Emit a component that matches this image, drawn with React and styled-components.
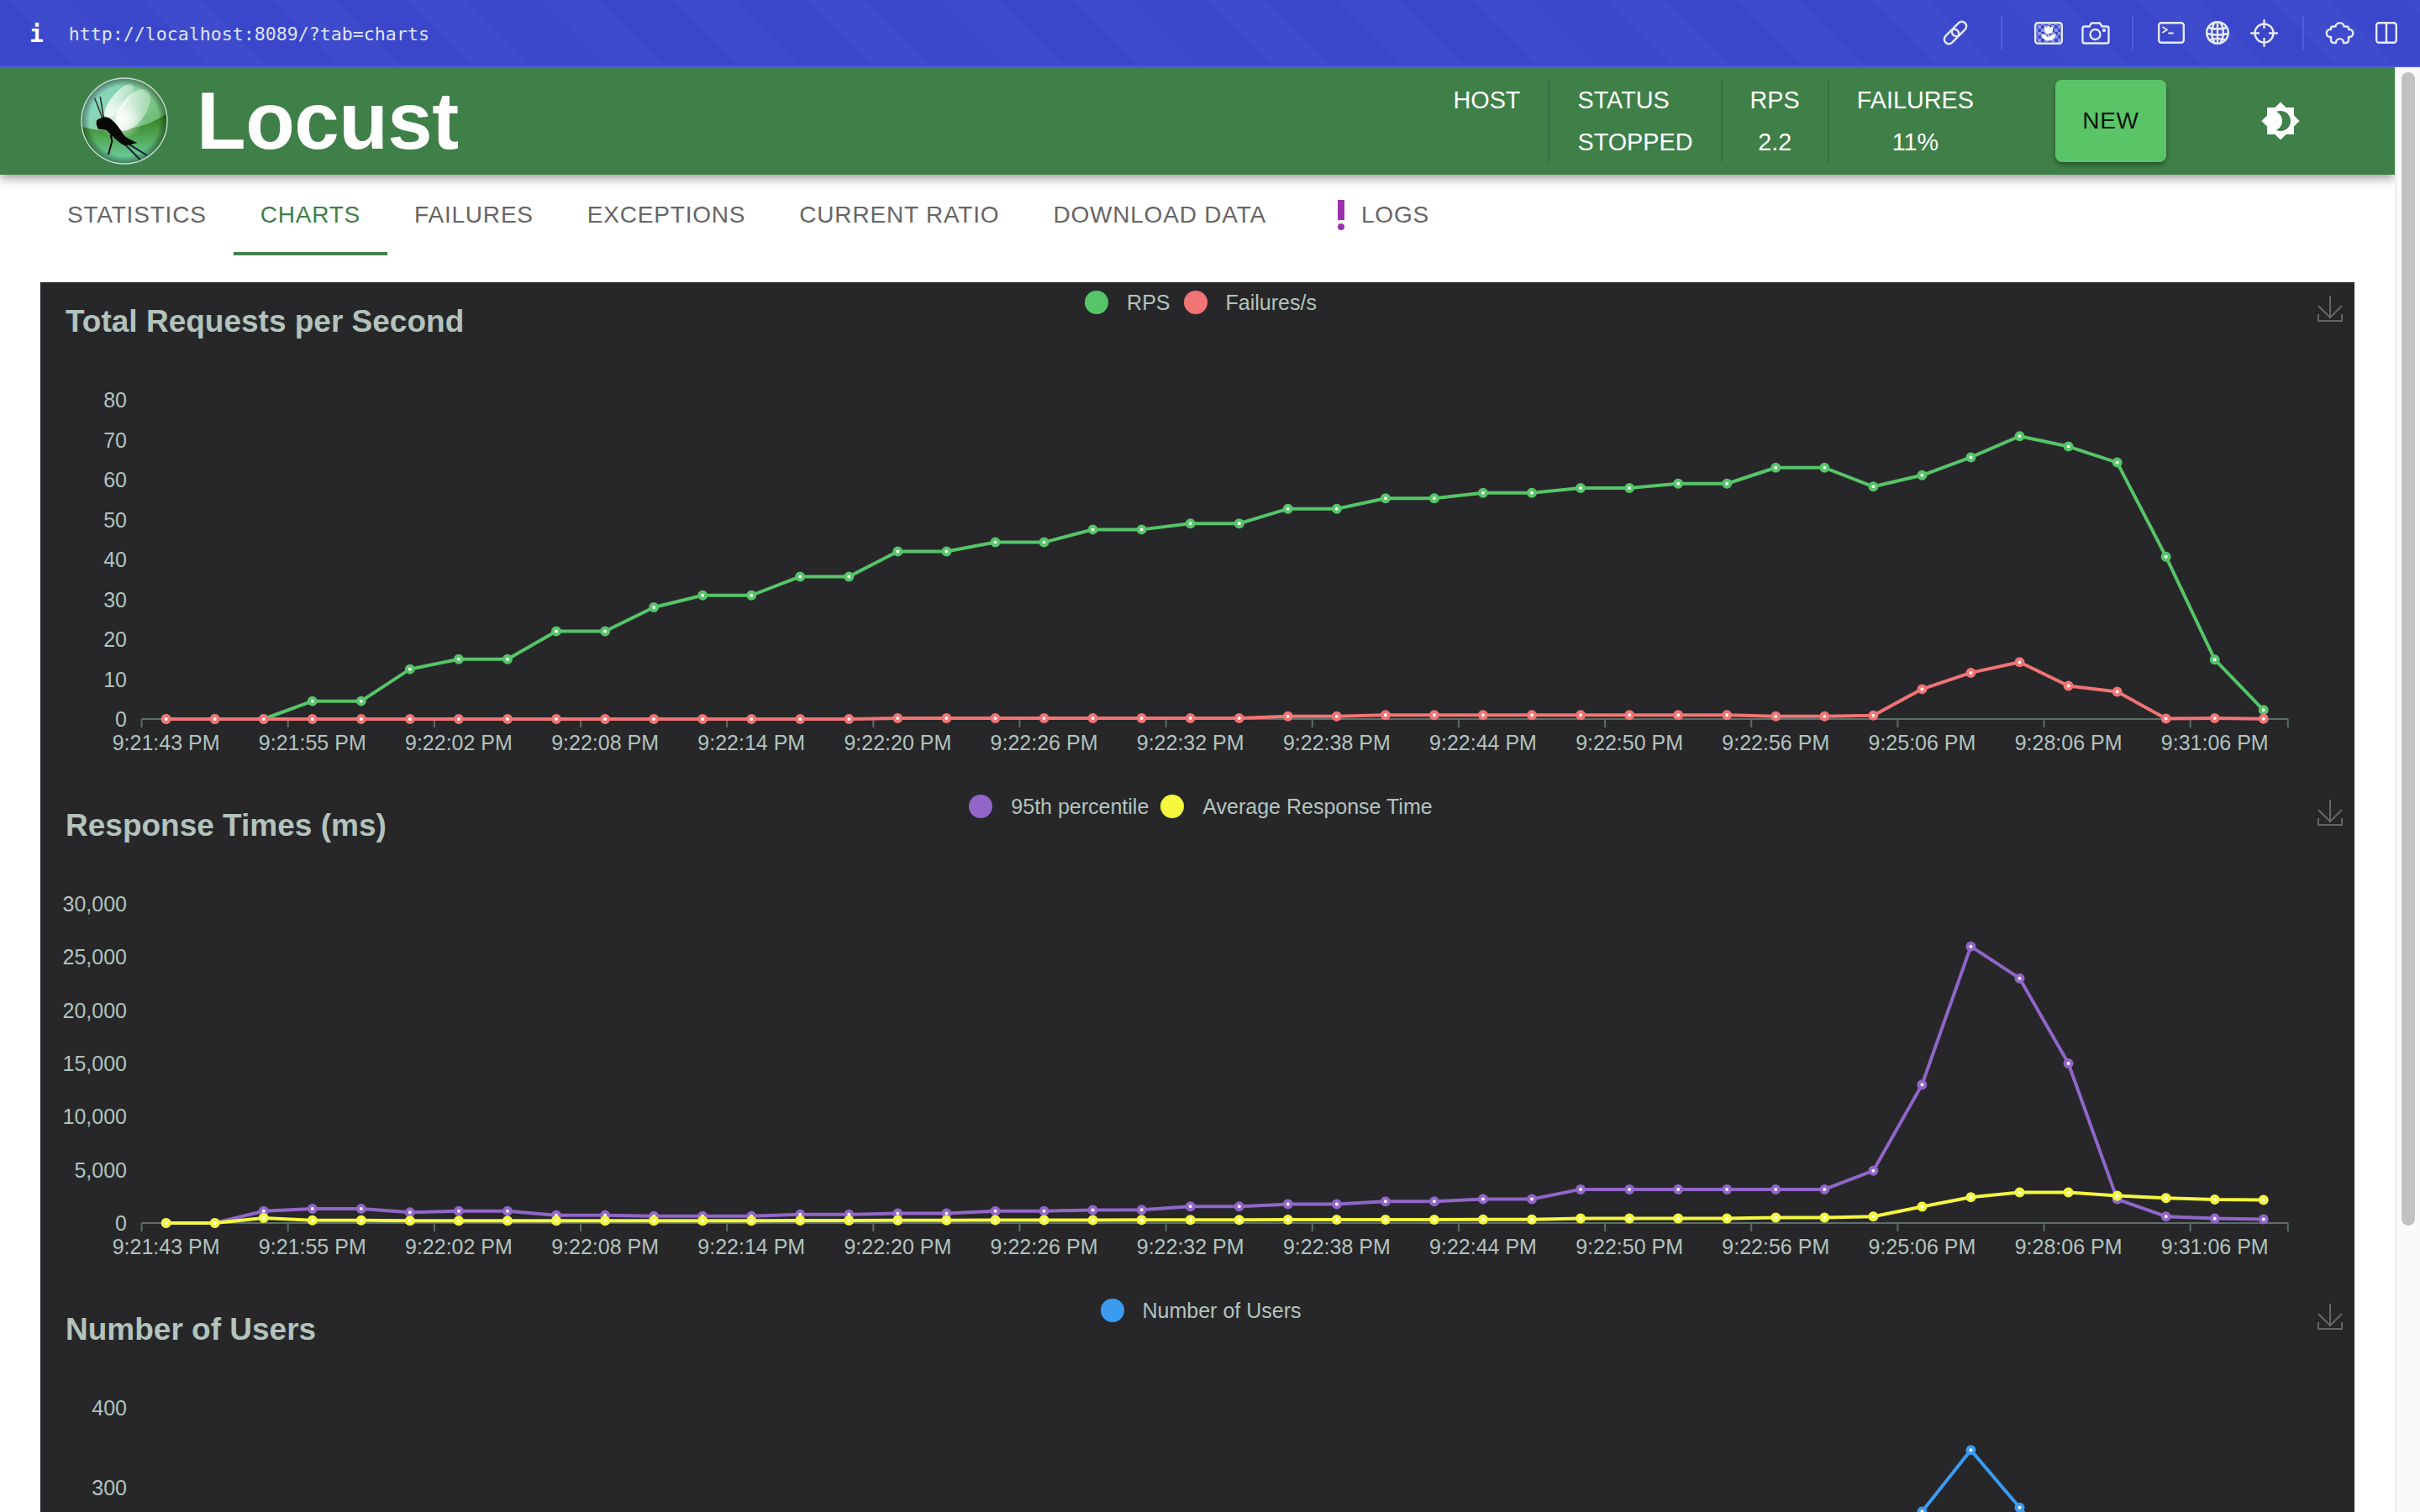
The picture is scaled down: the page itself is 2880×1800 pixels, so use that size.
import React from 'react'
import styled, { createGlobalStyle } from 'styled-components'

const GlobalStyle = createGlobalStyle`
  html, body {
    margin: 0;
    padding: 0;
    overflow: hidden;
    background: #fff;
    font-family: 'Liberation Sans', Arial, sans-serif;
  }
`

const LABELS = [
  '9:21:43 PM', '9:21:55 PM', '9:22:02 PM', '9:22:08 PM', '9:22:14 PM',
  '9:22:20 PM', '9:22:26 PM', '9:22:32 PM', '9:22:38 PM', '9:22:44 PM',
  '9:22:50 PM', '9:22:56 PM', '9:25:06 PM', '9:28:06 PM', '9:31:06 PM',
]

const RPS = [0, 0, 0, 4.5, 4.5, 12.5, 15, 15, 22, 22, 28, 31, 31, 35.7, 35.7, 42, 42, 44.3, 44.3, 47.5, 47.5, 49, 49, 52.7, 52.7, 55.3, 55.3, 56.7, 56.7, 57.9, 57.9, 59, 59, 63, 63, 58.25, 61.1, 65.6, 70.9, 68.3, 64.3, 40.7, 14.9, 2.25]
const FAILS = [0, 0, 0, 0, 0, 0, 0, 0, 0, 0, 0, 0, 0, 0, 0, 0.2, 0.2, 0.2, 0.2, 0.2, 0.2, 0.2, 0.2, 0.7, 0.7, 1, 1, 1, 1, 1, 1, 1, 1, 0.7, 0.7, 0.9, 7.5, 11.6, 14.25, 8.3, 6.85, 0.1, 0.2, 0.05]
const P95 = [0, 0, 1130, 1340, 1340, 1000, 1130, 1130, 735, 735, 655, 655, 655, 800, 800, 900, 900, 1130, 1130, 1220, 1245, 1560, 1560, 1770, 1770, 2030, 2030, 2245, 2245, 3165, 3165, 3165, 3165, 3165, 3165, 4920, 13015, 26000, 23000, 15000, 2244, 615, 433, 362]
const AVG = [0, 0, 472, 262, 262, 220, 220, 220, 220, 220, 220, 220, 220, 240, 240, 260, 260, 270, 270, 280, 300, 300, 300, 320, 320, 320, 320, 340, 340, 433, 433, 433, 433, 512, 512, 614, 1535, 2425, 2874, 2874, 2560, 2354, 2205, 2165]
const USERS = [...Array.from({ length: 36 }, (_, i) => i * 7), 270, 347, 275, 200, 150, 100, 40, 0]

const CHARTS = [
  {
    title: 'Total Requests per Second',
    max: 80,
    ticks: [80, 70, 60, 50, 40, 30, 20, 10, 0],
    legendGap: 16,
    series: [
      { name: 'RPS', color: '#56c568', data: RPS },
      { name: 'Failures/s', color: '#f17474', data: FAILS },
    ],
  },
  {
    title: 'Response Times (ms)',
    max: 30000,
    ticks: [30000, 25000, 20000, 15000, 10000, 5000, 0],
    legendGap: 14,
    series: [
      { name: '95th percentile', color: '#9166c8', data: P95 },
      { name: 'Average Response Time', color: '#f4f73d', data: AVG },
    ],
  },
  {
    // runs past the bottom of the window, only the upper ticks are in view
    title: 'Number of Users',
    max: 400,
    ticks: [400, 300],
    legendGap: 0,
    belowFold: true,
    series: [{ name: 'Number of Users', color: '#3b9bf0', data: USERS }],
  },
]

const TABS = ['STATISTICS', 'CHARTS', 'FAILURES', 'EXCEPTIONS', 'CURRENT RATIO', 'DOWNLOAD DATA']

const STATS = [
  { label: 'HOST', value: '', align: 'flex-end' },
  { label: 'STATUS', value: 'STOPPED', align: 'flex-start' },
  { label: 'RPS', value: '2.2', align: 'center' },
  { label: 'FAILURES', value: '11%', align: 'center' },
]

const Page = styled.div`
  width: 2880px;
  height: 1800px;
  display: flex;
  flex-direction: column;
  overflow: hidden;
`

const BrowserBar = styled.div`
  flex: none;
  height: 78px;
  border-bottom: 2px solid #4a59d8;
  display: flex;
  align-items: center;
  justify-content: space-between;
  padding: 0 27px 0 35px;
  color: #e6e9fa;
  background: repeating-linear-gradient(45deg, #3a47cb 0 62px, #3e4bcc 62px 112px);
`

const UrlGroup = styled.div`
  display: flex;
  align-items: center;
  gap: 30px;
  padding-top: 2px;
`

const InfoMark = styled.span`
  font: bold 28px 'DejaVu Sans Mono', monospace;
  color: #fff;
`

const Url = styled.span`
  font: 21.6px 'DejaVu Sans Mono', monospace;
  color: #dfe3f8;
`

const BarIcons = styled.div`
  display: flex;
  align-items: center;
`

const BarIcon = styled.svg`
  display: block;
  flex: none;
  margin-left: ${(p) => p.$gap || 0}px;
  fill: none;
  stroke: #e6e9fa;
  stroke-width: 2.4;
  stroke-linecap: round;
  stroke-linejoin: round;
`

const BarRule = styled.div`
  flex: none;
  width: 2px;
  height: 40px;
  margin: 0 ${(p) => p.$right}px 0 ${(p) => p.$left}px;
  background: #4f5dd8;
`

const Body = styled.div`
  flex: 1;
  min-height: 0;
  display: flex;
`

const Main = styled.main`
  width: 2850px;
  flex: none;
  overflow: hidden;
`

const ScrollTrack = styled.div`
  flex: 1;
  box-sizing: border-box;
  border-left: 2px solid #ececec;
  background: #fafafa;
  padding: 6px 6px 0 6px;
`

const ScrollThumb = styled.div`
  height: 1373px;
  width: 16px;
  border-radius: 8px;
  background: #c1c1c1;
`

const AppBar = styled.header`
  position: relative;
  z-index: 2;
  height: 128px;
  display: flex;
  align-items: center;
  padding: 0 112px 0 96px;
  background: #3f7f48;
  color: #fff;
  box-shadow: 0 4px 8px -2px rgba(0, 0, 0, 0.25), 0 8px 10px rgba(0, 0, 0, 0.12), 0 2px 20px rgba(0, 0, 0, 0.1);
`

const Brand = styled.div`
  display: flex;
  align-items: center;
  gap: 34px;
  flex: 1;
`

const BrandName = styled.span`
  font-size: 96px;
  font-weight: 700;
  line-height: 1;
  letter-spacing: -0.5px;
`

const Stats = styled.div`
  display: flex;
  align-items: stretch;
  height: 98px;
  margin-right: 64px;
`

const Stat = styled.div`
  display: flex;
  flex-direction: column;
  align-items: ${(p) => p.$align};
  padding: 0 33px;
  border-right: 2px solid #376f40;
  font-size: 28.8px;
  line-height: 49.5px;
  &:last-child {
    border-right: 0;
  }
`

const NewButton = styled.button`
  width: 132px;
  height: 98px;
  padding: 0;
  border: 0;
  border-radius: 8px;
  background: #5ac566;
  color: #101510;
  font: 28px 'Liberation Sans', Arial, sans-serif;
  letter-spacing: 0.8px;
  box-shadow: 0 3px 6px -1px rgba(0, 0, 0, 0.3), 0 4px 5px rgba(0, 0, 0, 0.14);
`

const ThemeToggle = styled.svg`
  display: block;
  margin-left: 112px;
  fill: #fff;
`

const TabRow = styled.nav`
  display: flex;
  padding-left: 48px;
`

const Tab = styled.div`
  height: 96px;
  display: flex;
  align-items: center;
  padding: 0 32px;
  font-size: 28px;
  letter-spacing: 0.8px;
  color: ${(p) => (p.$active ? '#3f7f48' : '#666')};
  box-shadow: ${(p) => (p.$active ? 'inset 0 -4px 0 #3f7f48' : 'none')};
`

const LogsMark = styled.svg`
  display: block;
  margin-left: 1px;
  fill: #9c2fae;
`

const ChartArea = styled.section`
  padding: 32px 48px 0;
`

const Card = styled.div`
  background: #27272a;
`

const ChartHead = styled.div`
  height: 80px;
  display: grid;
  grid-template-columns: 1fr auto 1fr;
  padding: 0 22px 0 30px;
`

const ChartTitle = styled.h2`
  margin: 0;
  padding-top: 27px;
  font-size: 37px;
  line-height: 40px;
  font-weight: 700;
  color: #b3c3bc;
`

const Legend = styled.div`
  display: flex;
  align-items: center;
  height: 28px;
  margin-top: 10px;
  gap: ${(p) => p.$gap}px;
`

const LegendItem = styled.div`
  display: flex;
  align-items: center;
  gap: 22px;
  font-size: 25px;
  color: #b3c3bc;
`

const LegendDot = styled.span`
  width: 28px;
  height: 28px;
  border-radius: 50%;
  background: ${(p) => p.$color};
`

const DownloadIcon = styled.svg`
  justify-self: end;
  margin: 15px -8px 0 0;
  fill: none;
  stroke: #666;
  stroke-width: 2;
`

const Plot = styled.svg`
  display: block;
`

const AxisLabel = styled.text`
  fill: #b3c3bc;
  font-size: 25px;
  font-family: 'Liberation Sans', Arial, sans-serif;
`

const PLOT_TOP = 60
const PLOT_BOTTOM = 440
const AXIS_LEFT = 120.6
const BAND = 58.05

const xAt = (i) => AXIS_LEFT + BAND * (i + 0.5)

function LineChart({ chart }) {
  const yAt = (v) => PLOT_BOTTOM - (v / chart.max) * (PLOT_BOTTOM - PLOT_TOP)
  const axisEnd = AXIS_LEFT + BAND * 44
  const tickXs = [...LABELS.map((_, i) => AXIS_LEFT + BAND * i * 3), axisEnd]

  return (
    <Plot width="2754" height="520">
      {chart.ticks.map((t) => (
        <AxisLabel key={t} x="103" y={yAt(t) + 9} textAnchor="end">
          {t.toLocaleString('en-US')}
        </AxisLabel>
      ))}
      {!chart.belowFold && (
        <>
          <line x1={AXIS_LEFT} x2={axisEnd} y1={PLOT_BOTTOM} y2={PLOT_BOTTOM} stroke="#5b6f66" strokeWidth="2" />
          {tickXs.map((x) => (
            <line key={x} x1={x} x2={x} y1={PLOT_BOTTOM} y2={PLOT_BOTTOM + 10} stroke="#5b6f66" strokeWidth="2" />
          ))}
          {LABELS.map((label, i) => (
            <AxisLabel key={label} x={xAt(i * 3)} y={PLOT_BOTTOM + 37} textAnchor="middle">
              {label}
            </AxisLabel>
          ))}
        </>
      )}
      {chart.series.map((s) => (
        <g key={s.name}>
          <polyline
            points={s.data.map((v, i) => `${xAt(i)},${yAt(v)}`).join(' ')}
            fill="none"
            stroke={s.color}
            strokeWidth="4"
            strokeLinejoin="round"
          />
          {s.data.map((v, i) => (
            <circle key={i} cx={xAt(i)} cy={yAt(v)} r="4" fill="#fff" stroke={s.color} strokeWidth="4" />
          ))}
        </g>
      ))}
    </Plot>
  )
}

function ChartBlock({ chart }) {
  return (
    <div>
      <ChartHead>
        <ChartTitle>{chart.title}</ChartTitle>
        <Legend $gap={chart.legendGap}>
          {chart.series.map((s) => (
            <LegendItem key={s.name}>
              <LegendDot $color={s.color} />
              {s.name}
            </LegendItem>
          ))}
        </Legend>
        <DownloadIcon width="30" height="32" viewBox="0 0 30 32">
          <path d="M15 1v26M1 13l14 14 14-14M1 23v8h28v-8" />
        </DownloadIcon>
      </ChartHead>
      <LineChart chart={chart} />
    </div>
  )
}

function Logo() {
  return (
    <svg width="104" height="104" viewBox="0 0 104 104">
      <defs>
        <linearGradient id="skyGrad" x1="0" y1="0" x2="1" y2="0.7">
          <stop offset="0" stopColor="#8fdce0" />
          <stop offset="0.55" stopColor="#84cf96" />
          <stop offset="1" stopColor="#5fae62" />
        </linearGradient>
        <linearGradient id="groundGrad" x1="0" y1="0" x2="0" y2="1">
          <stop offset="0" stopColor="#2f7a1c" />
          <stop offset="0.45" stopColor="#4fa552" />
          <stop offset="1" stopColor="#74d6ae" />
        </linearGradient>
        <radialGradient id="rimGrad" cx="0.5" cy="0.5" r="0.5">
          <stop offset="0.8" stopColor="#000" stopOpacity="0" />
          <stop offset="1" stopColor="#0a2a10" stopOpacity="0.55" />
        </radialGradient>
        <radialGradient id="glowGrad" cx="0.5" cy="0.5" r="0.5">
          <stop offset="0" stopColor="#fff" stopOpacity="0.95" />
          <stop offset="1" stopColor="#fff" stopOpacity="0" />
        </radialGradient>
        <linearGradient id="wingGrad" x1="0" y1="1" x2="0.6" y2="0">
          <stop offset="0" stopColor="#fff" stopOpacity="0.95" />
          <stop offset="1" stopColor="#fff" stopOpacity="0.3" />
        </linearGradient>
        <clipPath id="ballClip">
          <circle cx="52" cy="52" r="51" />
        </clipPath>
      </defs>
      <g clipPath="url(#ballClip)">
        <rect width="104" height="104" fill="url(#skyGrad)" />
        <path d="M0 58C20 66 70 68 104 42V104H0z" fill="url(#groundGrad)" />
        <ellipse cx="48" cy="50" rx="26" ry="24" fill="url(#glowGrad)" />
        <ellipse cx="45.7" cy="28" rx="9" ry="25" transform="rotate(40 45.7 28)" fill="url(#wingGrad)" />
        <ellipse cx="62.3" cy="39" rx="15" ry="29" transform="rotate(36 62.3 39)" fill="url(#wingGrad)" />
        <rect width="104" height="104" fill="url(#rimGrad)" />
      </g>
      <circle cx="52" cy="52" r="51" fill="none" stroke="#c9dcd0" strokeWidth="1.4" />
      <g stroke="#14203a" fill="none" strokeWidth="1.6">
        <path d="M25.7 48L16.7 24.7M27.3 48L23.3 23" stroke="#2a3a38" />
        <path d="M49 76.3L70.7 98M57.3 79.7L79 93" strokeWidth="2" />
        <path d="M35.7 68L37.3 76.3L33 92" stroke="#0b0b0b" strokeWidth="2" />
      </g>
      <path d="M19 51.3C22 49 27 47 30.7 47.3C36 49 41 54 44 58C48 63 51 69 54 71.3C58 74 63 76 67.3 78C62 79 57 81 52.3 81.3C47 79 43 75 39 71.3C36 68 33 65 30.7 63C27 62 23 63 20.7 61.3C19 58 18 54 19 51.3z" fill="#070907" />
    </svg>
  )
}

function BrowserIcons() {
  return (
    <BarIcons>
      <BarIcon width="30" height="30" viewBox="0 0 30 30">
        <rect x="5" y="9.500" width="11" height="20" rx="5.500" transform="rotate(45 10.500 19.500)" />
        <rect x="14" y="0.500" width="11" height="20" rx="5.500" transform="rotate(45 19.500 10.500)" />
      </BarIcon>
      <BarRule $left={39} $right={38} />
      <BarIcon width="34" height="27" viewBox="0 0 34 27">
        <defs>
          <pattern id="checks" width="8" height="8" patternUnits="userSpaceOnUse">
            <rect width="4" height="4" fill="#8d97e4" stroke="none" />
            <rect x="4" y="4" width="4" height="4" fill="#8d97e4" stroke="none" />
          </pattern>
        </defs>
        <rect x="1.200" y="1.200" width="31.600" height="24.600" rx="3" />
        <rect x="3" y="3" width="28" height="21" fill="url(#checks)" stroke="none" />
        <path d="M12 5l2.500 2L17 4.500 19.500 7 22 5v5c0 2.500-2 4-5 4s-5-1.500-5-4z" fill="#fff" stroke="none" />
        <path d="M17 13v9M9 15c4 0 8 3 8 7-4 0-8-3-8-7zM25 15c-4 0-8 3-8 7 4 0 8-3 8-7z" fill="#fff" stroke="#fff" strokeWidth="1" />
      </BarIcon>
      <BarIcon $gap={22} width="34" height="27" viewBox="0 0 34 27">
        <path d="M3.500 5.500h6l2.500-4h10l2.500 4h6a2 2 0 0 1 2 2v16a2 2 0 0 1-2 2h-27a2 2 0 0 1-2-2v-16a2 2 0 0 1 2-2z" />
        <circle cx="16.500" cy="15" r="6" />
        <circle cx="27" cy="10" r="1" fill="#e6e9fa" />
      </BarIcon>
      <BarRule $left={26} $right={29} />
      <BarIcon width="32" height="26" viewBox="0 0 32 26">
        <rect x="1.200" y="1.200" width="29.600" height="23.600" rx="3" />
        <path d="M6 6.500l5 3-5 3M13 13.500h5" strokeWidth="2" />
      </BarIcon>
      <BarIcon $gap={25} width="28" height="28" viewBox="0 0 28 28" strokeWidth="2">
        <circle cx="14" cy="14" r="12.800" />
        <path d="M3 8c6 2 16 2 22 0M1.500 15c8 2 17 2 25 0M4.500 22.500c6-2 13-2 19 0" />
        <path d="M11 1.500C6 8 6 20 11 26.500M17 1.500C22 8 22 20 17 26.500M14 1.200v25.600" />
      </BarIcon>
      <BarIcon $gap={25} width="33" height="33" viewBox="0 0 33 33">
        <circle cx="16.500" cy="16.500" r="11" />
        <path d="M16.500 1v9M16.500 23v9M1 16.500h9M23 16.500h9" />
      </BarIcon>
      <BarRule $left={29} $right={24} />
      <BarIcon width="37" height="27" viewBox="0 0 37 27">
        <path d="M10.500 5.500H13.500C13.500 0 23.500 0 23.500 5.500H26.500a2.500 2.500 0 0 1 2.500 2.500V9C36 8 36 19 29 18V22a3 3 0 0 1-3 3H23C23 18.500 14 18.500 14 25H11a3 3 0 0 1-3-3V18C1 19 1 8 8 9V8a2.500 2.500 0 0 1 2.500-2.500z" />
      </BarIcon>
      <BarIcon $gap={24} width="26" height="26" viewBox="0 0 26 26">
        <rect x="1.200" y="1.200" width="23.600" height="23.600" rx="3" />
        <path d="M13 1.200v23.600" />
      </BarIcon>
    </BarIcons>
  )
}

export default function App() {
  return (
    <Page>
      <GlobalStyle />
      <BrowserBar>
        <UrlGroup>
          <InfoMark>i</InfoMark>
          <Url>http://localhost:8089/?tab=charts</Url>
        </UrlGroup>
        <BrowserIcons />
      </BrowserBar>
      <Body>
        <Main>
          <AppBar>
            <Brand>
              <Logo />
              <BrandName>Locust</BrandName>
            </Brand>
            <Stats>
              {STATS.map((s) => (
                <Stat key={s.label} $align={s.align}>
                  <span>{s.label}</span>
                  <span>{s.value}</span>
                </Stat>
              ))}
            </Stats>
            <NewButton>NEW</NewButton>
            <ThemeToggle width="48" height="48" viewBox="0 0 24 24">
              <path d="M20 8.690V4h-4.690L12 .690 8.690 4H4v4.690L.690 12 4 15.310V20h4.690L12 23.310 15.310 20H20v-4.690L23.310 12 20 8.690zM12 18c-.890 0-1.740-.200-2.500-.550C11.560 16.500 13 14.420 13 12s-1.440-4.500-3.500-5.450C10.260 6.200 11.110 6 12 6c3.310 0 6 2.690 6 6s-2.690 6-6 6z" />
            </ThemeToggle>
          </AppBar>
          <TabRow>
            {TABS.map((t) => (
              <Tab key={t} $active={t === 'CHARTS'}>{t}</Tab>
            ))}
            <Tab>
              <LogsMark width="48" height="48" viewBox="0 0 24 24">
                <circle cx="12" cy="19" r="2" />
                <path d="M10 3h4v12h-4z" />
              </LogsMark>
              LOGS
            </Tab>
          </TabRow>
          <ChartArea>
            <Card>
              {CHARTS.map((c) => (
                <ChartBlock key={c.title} chart={c} />
              ))}
            </Card>
          </ChartArea>
        </Main>
        <ScrollTrack>
          <ScrollThumb />
        </ScrollTrack>
      </Body>
    </Page>
  )
}
